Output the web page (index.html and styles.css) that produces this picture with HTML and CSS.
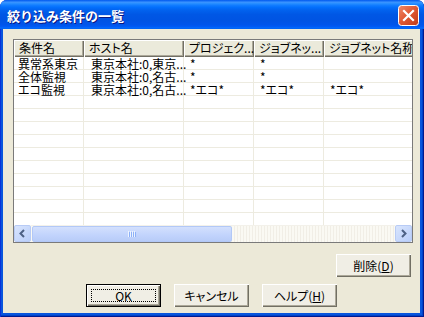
FILE: index.html
```html
<html>
<head>
<title>絞り込み条件の一覧</title>
<link rel="stylesheet" href="styles.css">
<meta http-equiv="Content-Type" content="text/html; charset=UTF-8">
</head>
<body>
<div class="window">
  <div class="titlebar">
    <div class="title-text">絞り込み条件の一覧</div>
    <div class="close-btn">
      <svg width="21" height="21" viewBox="0 0 21 21">
        <defs>
          <linearGradient id="cg" x1="0" y1="0" x2="1" y2="1">
            <stop offset="0" stop-color="#F08A6A"/>
            <stop offset="0.45" stop-color="#E15B36"/>
            <stop offset="1" stop-color="#C03A16"/>
          </linearGradient>
        </defs>
        <rect x="0.5" y="0.5" width="20" height="20" rx="3" fill="url(#cg)" stroke="#FFFFFF"/>
        <path d="M6 6 L15 15 M15 6 L6 15" stroke="#FFFFFF" stroke-width="2.2" stroke-linecap="square"/>
      </svg>
    </div>
  </div>
  <div class="client">
    <div class="listview">
      <div class="lv-header">
        <div class="hcell col1">条件名</div>
        <div class="hcell col2">ホスト名</div>
        <div class="hcell col3">プロジェク...</div>
        <div class="hcell col4">ジョブネッ...</div>
        <div class="hcell col5">ジョブネット名称</div>
      </div>
      <div class="lv-body">
        <div class="lv-row"><div class="cell col1">異常系東京</div><div class="cell col2">東京本社:0,東京...</div><div class="cell col3">*</div><div class="cell col4">*</div><div class="cell col5"></div></div>
        <div class="lv-row"><div class="cell col1">全体監視</div><div class="cell col2">東京本社:0,名古...</div><div class="cell col3">*</div><div class="cell col4">*</div><div class="cell col5"></div></div>
        <div class="lv-row"><div class="cell col1">エコ監視</div><div class="cell col2">東京本社:0,名古...</div><div class="cell col3">*エコ*</div><div class="cell col4">*エコ*</div><div class="cell col5">*エコ*</div></div>
        <div class="lv-row"><div class="cell col1"></div><div class="cell col2"></div><div class="cell col3"></div><div class="cell col4"></div><div class="cell col5"></div></div>
        <div class="lv-row"><div class="cell col1"></div><div class="cell col2"></div><div class="cell col3"></div><div class="cell col4"></div><div class="cell col5"></div></div>
        <div class="lv-row"><div class="cell col1"></div><div class="cell col2"></div><div class="cell col3"></div><div class="cell col4"></div><div class="cell col5"></div></div>
        <div class="lv-row"><div class="cell col1"></div><div class="cell col2"></div><div class="cell col3"></div><div class="cell col4"></div><div class="cell col5"></div></div>
        <div class="lv-row"><div class="cell col1"></div><div class="cell col2"></div><div class="cell col3"></div><div class="cell col4"></div><div class="cell col5"></div></div>
        <div class="lv-row"><div class="cell col1"></div><div class="cell col2"></div><div class="cell col3"></div><div class="cell col4"></div><div class="cell col5"></div></div>
        <div class="lv-row"><div class="cell col1"></div><div class="cell col2"></div><div class="cell col3"></div><div class="cell col4"></div><div class="cell col5"></div></div>
        <div class="lv-row"><div class="cell col1"></div><div class="cell col2"></div><div class="cell col3"></div><div class="cell col4"></div><div class="cell col5"></div></div>
        <div class="lv-row"><div class="cell col1"></div><div class="cell col2"></div><div class="cell col3"></div><div class="cell col4"></div><div class="cell col5"></div></div>
        <div class="lv-row"><div class="cell col1"></div><div class="cell col2"></div><div class="cell col3"></div><div class="cell col4"></div><div class="cell col5"></div></div>
      </div>
      <div class="hscroll">
        <div class="sb-btn">
          <svg width="9" height="9" viewBox="0 0 9 9"><path d="M6 1 L2.5 4.5 L6 8" fill="none" stroke="#4D6185" stroke-width="2"/></svg>
        </div>
        <div class="sb-track">
          <div class="sb-thumb">
            <svg width="8" height="6" viewBox="0 0 8 6"><path d="M0.5 0 V6 M2.5 0 V6 M4.5 0 V6 M6.5 0 V6" stroke="#EEF4FE" stroke-width="1"/><path d="M1.5 1 V7 M3.5 1 V7 M5.5 1 V7 M7.5 1 V7" stroke="#8CB0F8" stroke-width="1"/></svg>
          </div>
        </div>
        <div class="sb-btn">
          <svg width="9" height="9" viewBox="0 0 9 9"><path d="M3 1 L6.5 4.5 L3 8" fill="none" stroke="#4D6185" stroke-width="2"/></svg>
        </div>
      </div>
    </div>
    <div class="delete-row">
      <div class="button">削除(<u>D</u>)</div>
    </div>
    <div class="button-row">
      <div class="button default"><span class="focus-rect">OK</span></div>
      <div class="button">キャンセル</div>
      <div class="button">ヘルプ(<u>H</u>)</div>
    </div>
  </div>
</div>
</body>
</html>
```
FILE: styles.css
```css
body {
 margin: 0;
 background: #FFFFFF;
 font-family: "MS UI Gothic", "Noto Sans CJK JP", sans-serif;
 font-size: 12px;
 color: #000000;
}
.window {
 width: 424px;
 height: 317px;
 display: flex;
 flex-direction: column;
 border-radius: 7px 7px 0 0;
 background: #0855DD;
 box-shadow: inset 1px 0 #0831D9, inset -1px -1px #001A8F, inset -2px -2px #0042C8;
 overflow: hidden;
}
.titlebar {
 height: 29px;
 flex: none;
 display: flex;
 align-items: center;
 justify-content: space-between;
 padding: 0 5px 0 7px;
 background: linear-gradient(180deg, #0058EE 0%, #3A93FF 8%, #288EFF 12%, #127DFF 18%, #036FFC 25%, #0262EE 35%, #0057E5 50%, #0054E3 70%, #0055EB 85%, #005BF5 92%, #026AFE 96%, #0062EF 100%);
}
.title-text {
 color: #FFFFFF;
 font-size: 13px;
 font-weight: bold;
 text-shadow: 1px 1px 0 #0A1883;
 margin-top: 1px;
}
.close-btn {
 width: 21px;
 height: 21px;
 margin-top: 1px;
}
.close-btn svg {
 display: block;
}
.client {
 flex: 1;
 margin: 0 4px 4px 3px;
 background: #ECE9D8;
 display: flex;
 flex-direction: column;
}
.listview {
 margin: 10px 7px 0 10px;
 height: 204px;
 box-sizing: border-box;
 border: 1px solid #7A7A7A;
 background: #FFFFFF;
 display: flex;
 flex-direction: column;
 overflow: hidden;
}
.lv-header {
 height: 17px;
 flex: none;
 display: flex;
}
.hcell {
 flex: none;
 box-sizing: border-box;
 height: 17px;
 line-height: 16px;
 padding-left: 5px;
 background: #EBEADB;
 box-shadow: inset 1px 1px #FFFFFF, inset -1px -1px #716F64, inset -2px -2px #ACA899;
 white-space: nowrap;
 overflow: hidden;
 font-feature-settings: "palt";
}
.col1 { width: 70px; }
.col2 { width: 100px; }
.col3 { width: 70px; }
.col4 { width: 70px; }
.col5 { width: 100px; }
.lv-body {
 flex: 1;
 overflow: hidden;
}
.lv-row {
 height: 13px;
 display: flex;
 box-shadow: inset 0 -1px #EDEBE0;
}
.cell {
 flex: none;
 box-sizing: border-box;
 height: 13px;
 line-height: 13px;
 padding-left: 4px;
 box-shadow: inset -1px 0 #EDEBE0;
 white-space: nowrap;
 font-feature-settings: "palt";
}
.col2.cell { padding-left: 7px; }
.col3.cell, .col4.cell, .col5.cell { padding-left: 6px; }
.hscroll {
 height: 17px;
 flex: none;
 display: flex;
 background: #FAF9F3;
}
.sb-btn {
 width: 17px;
 height: 17px;
 flex: none;
 box-sizing: border-box;
 border: 1px solid #B8CBF5;
 border-radius: 2px;
 background: linear-gradient(135deg, #D9E5FD, #B9CEFA);
 display: flex;
 align-items: center;
 justify-content: center;
}
.sb-track {
 flex: 1;
 display: flex;
 background: repeating-linear-gradient(90deg, #FAF9F3 0, #FAF9F3 2px, #F1EEE6 2px, #F1EEE6 3px);
 border-top: 1px solid #F3F1EA;
}
.sb-thumb {
 width: 200px;
 margin-left: 1px;
 box-sizing: border-box;
 border: 1px solid #B2C8F7;
 border-radius: 2px;
 background: linear-gradient(180deg, #D3E0FD, #C1D3FC 60%, #B8CCF8);
 display: flex;
 align-items: center;
 justify-content: center;
}
.delete-row {
 display: flex;
 justify-content: flex-end;
 margin: 11px 9px 0 0;
}
.button-row {
 display: flex;
 justify-content: center;
 gap: 13px;
 margin-top: 7px;
}
.button {
 width: 75px;
 height: 23px;
 box-sizing: border-box;
 background: #F0EEE5;
 box-shadow: inset 1px 1px #FFFFFF, inset -1px -1px #716F64, inset -2px -2px #ACA899;
 display: flex;
 align-items: center;
 justify-content: center;
 line-height: 12px;
 white-space: nowrap;
 font-feature-settings: "palt";
}
.button u {
 text-decoration: underline;
 text-underline-offset: 1px;
}
.button.default {
 border: 1px solid #000000;
}
.focus-rect {
 width: 65px;
 height: 13px;
 box-sizing: border-box;
 border: 1px dotted #000000;
 display: flex;
 align-items: center;
 justify-content: center;
}
```
